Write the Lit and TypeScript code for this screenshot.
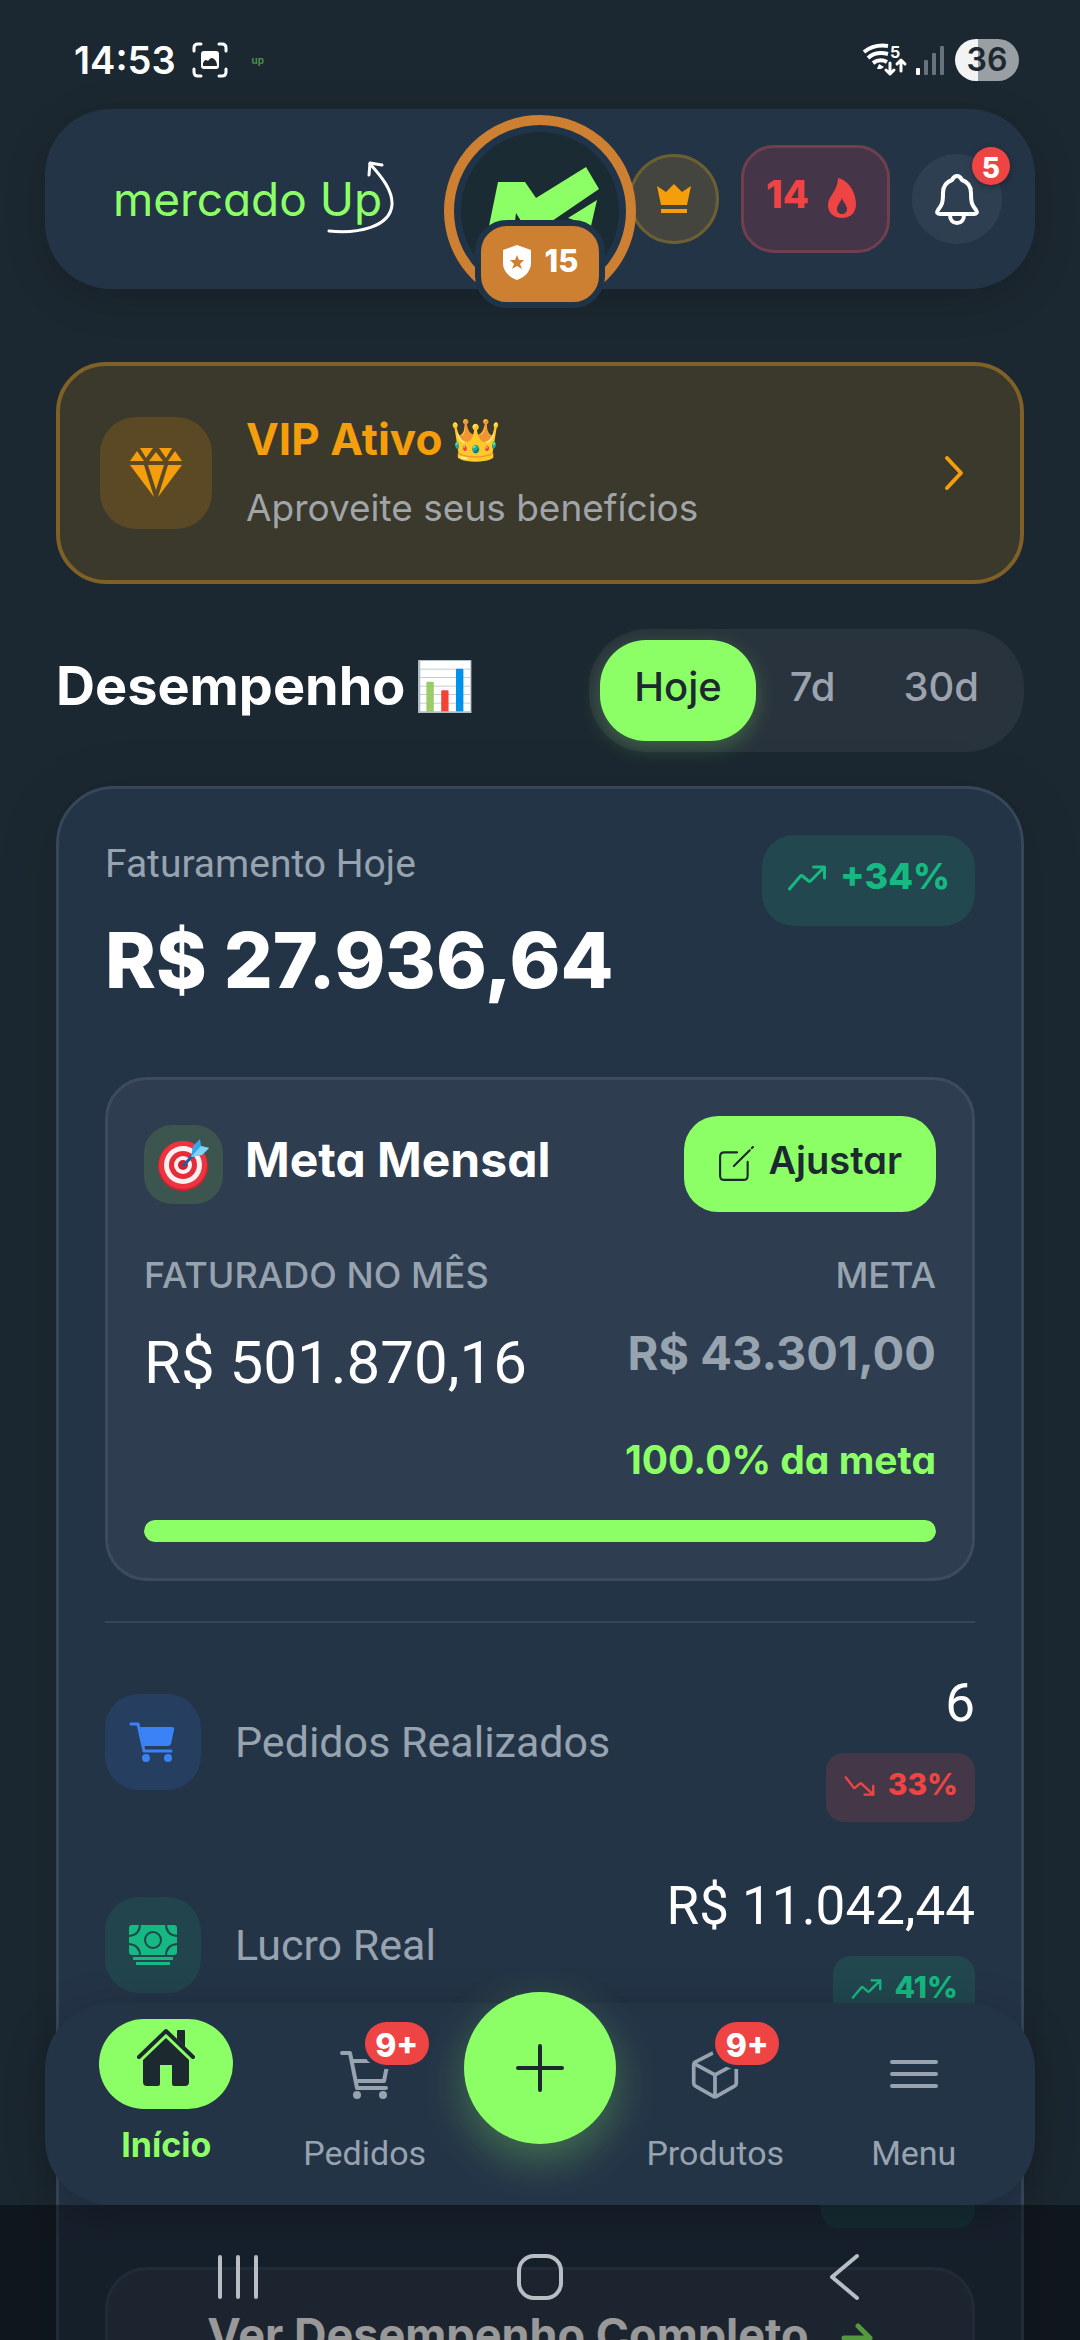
import { LitElement, html, css, svg, nothing } from "lit";
import { customElement, property, state } from "lit/decorators.js";

const trendUp = svg`<path d="M2 25 L13 12 Q14 11 15 12 L21 17 Q22 18 23 17 L36 4 M26 3 H37 V14" />`;
const trendDown = svg`<path d="M2 3 L12 16 Q13 17 14 16 L20 11 Q21 10 22 11 L36 24 M26 25 H37 V14" />`;

const cartOutline = svg`
  <path d="M2 4 H10 L17 39 H46 M12 12 H48 L44 32 H16" fill="none" stroke="currentColor" stroke-width="4" stroke-linecap="round" stroke-linejoin="round" />
  <circle cx="17" cy="46" r="4" fill="currentColor" /><circle cx="43" cy="46" r="4" fill="currentColor" />`;

const cubeOutline = svg`
  <path d="M26 3 L47 14 Q49 15 49 18 V37 Q49 39 47 40 L28 51 Q26 52 24 51 L5 40 Q3 39 3 37 V18 Q3 15 5 14 Z M4 16 L26 28 L48 16 M26 28 V51" fill="none" stroke="currentColor" stroke-width="4" stroke-linejoin="round" />`;

const menuLines = svg`
  <path d="M3 13 H47 M3 25 H47 M3 37 H47" fill="none" stroke="currentColor" stroke-width="4" stroke-linecap="round" />`;

const homeSolid = svg`
  <path d="M2 30 L29 4 L56 30" fill="none" stroke="currentColor" stroke-width="4" stroke-linecap="round" stroke-linejoin="round" />
  <path d="M40 4 Q40 3 41 3 H47 Q48 3 48 4 V20 L40 12 Z" fill="currentColor" />
  <path d="M29 11 L52 33 V55 Q52 59 48 59 H37 Q35 59 35 57 V38 H23 V57 Q23 59 21 59 H10 Q6 59 6 55 V33 Z" fill="currentColor" />`;

@customElement("trend-badge")
export class TrendBadge extends LitElement {
  @property() value = "";
  @property() direction: "up" | "down" = "up";
  @property() size: "large" | "small" = "small";

  static styles = css`
    :host { display: block; }
    .badge {
      display: flex; align-items: center; gap: 13px; box-sizing: border-box;
      height: 69px; padding: 0 17px 8px 18px; border-radius: 18px;
      font: 800 30px/40px Inter, sans-serif; color: #ef4444; background: #443848;
    }
    .up { color: #15b981; background: #22474f; }
    .large { height: 91px; border-radius: 32px; padding: 0 25px 9px 25px; font-size: 36px; }
    svg { width: 31px; height: 22px; fill: none; stroke: currentColor; stroke-width: 3; stroke-linecap: round; stroke-linejoin: round; margin-top: 4px; }
    .large svg { width: 40px; height: 28px; }
  `;

  render() {
    return html`<div class="badge ${this.direction} ${this.size}">
      <svg viewBox="0 0 39 28" aria-hidden="true">${this.direction === "up" ? trendUp : trendDown}</svg>
      <span>${this.value}</span>
    </div>`;
  }
}

@customElement("status-bar")
export class StatusBar extends LitElement {
  static styles = css`
    :host { display: block; }
    .bar {
      display: flex; align-items: center; box-sizing: border-box; height: 109px;
      padding: 10px 61px 0 74px; color: #fff; font: 600 38px/48px Inter, sans-serif;
    }
    .shot { width: 36px; height: 36px; margin-left: 16px; }
    .app { margin-left: 24px; color: #4f9b4a; font-size: 10px; line-height: 12px; }
    .right { margin-left: auto; display: flex; align-items: center; gap: 9px; }
    .wifi { width: 45px; height: 34px; overflow: visible; }
    .signal { width: 28px; height: 30px; }
    .battery {
      width: 64px; height: 42px; border-radius: 21px; margin-left: 2px; text-align: center;
      font-size: 32px; line-height: 42px; color: #1d2831;
      background: linear-gradient(90deg, #f1f3f4 36%, #9a9fa4 36%);
    }
  `;

  render() {
    return html`<div class="bar">
      <span>14:53</span>
      <svg class="shot" viewBox="0 0 36 36" aria-hidden="true">
        <path d="M2 9 V6 Q2 2 6 2 H9 M27 2 H30 Q34 2 34 6 V9 M34 27 V30 Q34 34 30 34 H27 M9 34 H6 Q2 34 2 30 V27" fill="none" stroke="#fff" stroke-width="3" stroke-linecap="round" />
        <rect x="9" y="9" width="18" height="18" rx="3" fill="#fff" />
        <path d="M11 24 V21 Q13 16 16 19 Q19 14 22 17 Q25 19 25 24 Z" fill="#1d2831" />
      </svg>
      <span class="app">up</span>
      <div class="right">
        <svg class="wifi" viewBox="0 0 45 34" aria-hidden="true">
          <g fill="none" stroke="#fff" stroke-width="4">
            <path d="M2 9 Q12 1 26 3" /><path d="M6 15 Q14 8 26 11" /><path d="M11 20 Q18 15 25 19" />
          </g>
          <path d="M17 21 L22 24 L19 26 H15 Z" fill="#fff" />
          <g fill="none" stroke="#fff" stroke-width="3" stroke-linecap="round" stroke-linejoin="round">
            <path d="M28 20 V30 M24 27 L28 31 L32 27" /><path d="M39 28 V18 M35 21 L39 17 L43 21" />
          </g>
          <text x="28" y="15" fill="#fff" font-size="16" font-weight="700" font-family="Inter, sans-serif">5</text>
        </svg>
        <svg class="signal" viewBox="0 0 28 30" aria-hidden="true">
          <rect x="0" y="23" width="4" height="7" rx="1" fill="#fff" />
          <g fill="#68727b"><rect x="8" y="15" width="4" height="15" rx="1" /><rect x="16" y="8" width="4" height="22" rx="1" /><rect x="24" y="1" width="4" height="29" rx="1" /></g>
        </svg>
        <span class="battery">36</span>
      </div>
    </div>`;
  }
}

@customElement("app-header")
export class AppHeader extends LitElement {
  static styles = css`
    :host { display: block; }
    button { font: inherit; color: inherit; border: 0; margin: 0; padding: 0; background: none; }
    .header {
      position: relative; display: flex; align-items: center; justify-content: space-between;
      height: 180px; margin: 0 45px; padding: 0 33px 0 68px; border-radius: 66px;
      background: #243447; box-shadow: 0 10px 40px rgba(0, 0, 0, 0.2); font-family: Inter, sans-serif;
    }
    .logo { position: relative; font-size: 46px; line-height: 64px; font-weight: 400; color: #8cff66; font-feature-settings: "cv11"; }
    .swoosh { position: absolute; right: -12px; top: -6px; width: 72px; height: 76px; }
    .actions { display: flex; align-items: center; gap: 22px; }
    .crown {
      display: grid; place-items: center; width: 90px; height: 90px; box-sizing: border-box;
      border-radius: 45px; border: 3px solid #6c6033; background: #44453f;
    }
    .crown svg { width: 36px; height: 32px; }
    .streak {
      display: flex; align-items: center; gap: 18px; height: 108px; box-sizing: border-box; padding: 0 30px 10px 22px;
      border-radius: 33px; border: 3px solid #713e4e; background: #443648; color: #ef4444; font-size: 38px; font-weight: 800;
    }
    .streak svg { width: 30px; height: 40px; margin-top: 7px; }
    .bell { position: relative; display: grid; place-items: center; width: 90px; height: 90px; border-radius: 45px; background: #2f3f52; }
    .bell svg { width: 44px; height: 52px; }
    .count {
      position: absolute; right: -8px; top: -7px; width: 38px; height: 38px; border-radius: 19px;
      background: #ef4444; color: #fff; font-size: 28px; line-height: 42px; font-weight: 800;
      box-shadow: 0 2px 6px rgba(0, 0, 0, 0.3);
    }
    .avatar {
      position: absolute; left: 50%; top: 6px; margin-left: -96px; width: 192px; height: 192px; box-sizing: border-box;
      border: 10px solid #cd8032; border-radius: 96px; background: #1f3349;
    }
    .mark { display: block; width: 172px; height: 172px; }
    .level {
      position: absolute; left: 21px; top: 95px; display: flex; align-items: center; justify-content: center; gap: 13px;
      width: 130px; height: 88px; box-sizing: border-box; border: 6px solid #1f3349; border-radius: 32px;
      padding-bottom: 7px; background: #cd8032; color: #fff; font-size: 31px; font-weight: 800;
    }
    .level svg { width: 30px; height: 35px; margin-top: 4px; }
  `;

  render() {
    return html`<header class="header">
      <div class="logo">mercado Up
        <svg class="swoosh" viewBox="0 0 72 76" aria-hidden="true" fill="none" stroke="#fff" stroke-linecap="round" stroke-linejoin="round">
          <path d="M7 70 C36 73 68 66 70 44 C71 30 60 16 48 3" stroke-width="3" />
          <path d="M47 14 L48 2 L60 4" stroke-width="3" />
        </svg>
      </div>
      <div class="actions">
        <button class="crown" aria-label="VIP">
          <svg viewBox="0 0 36 32" fill="#f59e0b"><path d="M1 3 L10 9 L18 1 L26 9 L35 3 L31 22 H5 Z M5 26 H31 V30 H5 Z" /></svg>
        </button>
        <button class="streak">
          <span>14</span>
          <svg viewBox="0 0 30 40" fill="#ef4444" aria-hidden="true"><path fill-rule="evenodd" d="M11 0 C21 2 29 14 29 26 C29 35 23 40 15 40 C7 40 1 35 1 27 C1 18 11 13 11 0 Z M15 20 C14 24 10 27 10 31 C10 34 12 36 15 36 C18 36 20 34 20 31 C20 27 16 24 15 20 Z" /></svg>
        </button>
        <button class="bell" aria-label="5">
          <svg viewBox="0 0 44 52" fill="none" stroke="#fff" stroke-width="4" stroke-linejoin="round">
            <path d="M22 3 C19 3 18 5 17 7 C11 9 8 14 8 20 C8 30 7 32 3 37 C1 40 3 41 5 41 H39 C41 41 43 40 41 37 C37 32 36 30 36 20 C36 14 33 9 27 7 C26 5 25 3 22 3 Z" />
            <path d="M15 42 C15 47 18 50 22 50 C26 50 29 47 29 42" />
          </svg>
          <span class="count">5</span>
        </button>
      </div>
      <div class="avatar">
        <svg class="mark" viewBox="454 125 172 172" aria-hidden="true">
          <circle cx="540" cy="211" r="79" fill="#1b2b33" />
          <path d="M498 182 H525 L536 198 L586 167 L599 189 L552 221 H521 L516 213 L515 221 L489 226 Z M597 200 L591 226 L568 218 Z" fill="#8cff66" />
        </svg>
        <div class="level">
          <svg viewBox="0 0 30 35" aria-hidden="true"><path d="M15 0 L29 5 V18 C29 26 23 32 15 35 C7 32 1 26 1 18 V5 Z" fill="#fff" /><path d="M15 10 L17 15 L22 15 L18 19 L20 24 L15 21 L10 24 L12 19 L8 15 L13 15 Z" fill="#cd8032" /></svg>
          <span>15</span>
        </div>
      </div>
    </header>`;
  }
}

@customElement("goal-card")
export class GoalCard extends LitElement {
  @property({ type: Number }) progress = 100;

  static styles = css`
    :host { display: block; font-family: Inter, sans-serif; font-feature-settings: "cv11"; }
    .card { padding: 36px; border: 3px solid #3d4b5e; border-radius: 42px; background: #2f3d50; }
    .top { display: flex; align-items: center; height: 96px; }
    .target { display: grid; place-items: center; width: 79px; height: 79px; border-radius: 28px; background: #3d554f; }
    .target svg { width: 52px; height: 52px; margin-top: 2px; }
    h3 { margin: 0 auto 0 22px; padding-bottom: 8px; font-size: 48px; line-height: 60px; font-weight: 700; color: #fff; }
    button {
      display: flex; align-items: center; gap: 14px; height: 96px; border: 0; border-radius: 34px; padding: 0 34px 8px 34px;
      background: #8cff66; color: #1c2a2f; font: 600 38px/44px Inter, sans-serif; font-feature-settings: "cv11";
    }
    button svg { width: 36px; height: 36px; margin-top: 8px; }
    .figures { display: flex; justify-content: space-between; margin-top: 41px; }
    .end { text-align: right; }
    .caption { font-size: 36px; line-height: 44px; font-weight: 500; color: #97a3af; }
    .current { margin-top: 25px; font: 400 60px/82px Roboto, sans-serif; color: #fff; }
    .goal { margin-top: 25px; font-size: 47px; line-height: 62px; font-weight: 700; color: #97a3af; }
    .percent { margin-top: 50px; font-size: 39px; line-height: 52px; font-weight: 700; color: #8cff66; }
    .track { height: 22px; margin-top: 34px; border-radius: 11px; background: #3d4b5e; overflow: hidden; }
    .fill { height: 100%; border-radius: 11px; background: #8cff66; }
  `;

  render() {
    return html`<section class="card">
      <div class="top">
        <div class="target">
          <svg viewBox="0 0 52 52" aria-hidden="true">
            <circle cx="25" cy="27" r="25" fill="#d3202f" /><circle cx="25" cy="26" r="24" fill="#ee3340" />
            <circle cx="25" cy="26" r="19" fill="#fbeff0" /><circle cx="25" cy="26" r="14" fill="#e52c3b" />
            <circle cx="25" cy="26" r="9" fill="#fbeff0" /><circle cx="25" cy="26" r="5" fill="#d3202f" />
            <path d="M25 27 L38 13" stroke="#1b5fa8" stroke-width="3" />
            <path d="M33 18 L35 7 L42 0 L43 7 L51 9 L44 16 Z" fill="#35a7ea" /><path d="M33 18 L43 7 L51 9 L44 16 Z" fill="#7fd4fa" />
          </svg>
        </div>
        <h3>Meta Mensal</h3>
        <button>
          <svg viewBox="0 0 34 34" fill="none" stroke="#1c2a2f" stroke-width="2" stroke-linecap="round" stroke-linejoin="round" aria-hidden="true">
            <path d="M18 6 H6 Q2 6 2 10 V28 Q2 32 6 32 H24 Q28 32 28 28 V15" /><path d="M15 19 L30 4 M32 2 L33 1" />
          </svg>
          <span>Ajustar</span>
        </button>
      </div>
      <div class="figures">
        <div>
          <div class="caption">FATURADO NO MÊS</div>
          <div class="current">R$ 501.870,16</div>
        </div>
        <div class="end">
          <div class="caption">META</div>
          <div class="goal">R$ 43.301,00</div>
          <div class="percent">100.0% da meta</div>
        </div>
      </div>
      <div class="track"><div class="fill" style="width:${this.progress}%"></div></div>
    </section>`;
  }
}

@customElement("bottom-nav")
export class BottomNav extends LitElement {
  static styles = css`
    :host { display: block; font-family: Inter, sans-serif; }
    button { font: inherit; color: inherit; border: 0; margin: 0; padding: 0; background: none; }
    .nav {
      display: flex; align-items: flex-start; height: 202px; box-sizing: border-box; margin: 0 45px; padding: 0 22px;
      border-radius: 66px; background: #243447; box-shadow: 0 6px 40px rgba(0, 0, 0, 0.22);
    }
    .tab { flex: 1; display: flex; flex-direction: column; align-items: center; padding-top: 16px; color: #97a3af; text-decoration: none; }
    .icon { display: grid; place-items: center; height: 110px; }
    .glyph { position: relative; width: 50px; height: 50px; }
    .glyph svg { display: block; width: 100%; height: 100%; }
    .label { font: 400 34px/48px Roboto, sans-serif; }
    .active { color: #8cff66; }
    .active .icon { width: 134px; height: 90px; border-radius: 45px; background: #8cff66; color: #1c2a2f; }
    .active .glyph { width: 60px; height: 62px; margin-bottom: 12px; }
    .active .label { margin-top: 16px; font: 700 34px/40px Inter, sans-serif; }
    .count {
      position: absolute; left: 25px; top: -27px; width: 64px; height: 43px; border-radius: 22px; box-shadow: 0 0 0 4px #243447;
      background: #ef4444; color: #fff; font: 800 32px/48px Inter, sans-serif; text-align: center;
    }
    .add {
      display: grid; place-items: center; width: 152px; height: 152px; margin-top: -11px; border-radius: 76px;
      background: #8cff66; box-shadow: 0 16px 44px rgba(140, 255, 102, 0.3);
    }
    .add svg { width: 50px; height: 50px; }
    .system { display: flex; align-items: center; justify-content: space-between; height: 135px; box-sizing: border-box; padding: 9px 211px 0; background: rgba(0, 0, 0, 0.4); }
    .system button { width: 50px; height: 50px; }
    .system svg { display: block; width: 50px; height: 50px; fill: none; stroke: #b9bdc4; stroke-width: 4; stroke-linecap: round; stroke-linejoin: round; }
  `;

  private tab(label: string, glyph: unknown, box: string, count = "", active = false) {
    return html`<a class="tab ${active ? "active" : ""}" href="#${label}">
      <span class="icon"><span class="glyph">
        <svg viewBox=${box} aria-hidden="true">${glyph}</svg>
        ${count ? html`<span class="count">${count}</span>` : nothing}
      </span></span>
      <span class="label">${label}</span>
    </a>`;
  }

  render() {
    return html`
      <nav class="nav">
        ${this.tab("Início", homeSolid, "0 0 58 62", "", true)}
        ${this.tab("Pedidos", cartOutline, "0 0 50 50", "9+")}
        <button class="add" aria-label="+">
          <svg viewBox="0 0 50 50" fill="none" stroke="#1c2a2f" stroke-width="4" stroke-linecap="round"><path d="M25 3 V47 M3 25 H47" /></svg>
        </button>
        ${this.tab("Produtos", cubeOutline, "0 0 52 54", "9+")}
        ${this.tab("Menu", menuLines, "0 0 50 50")}
      </nav>
      <div class="system">
        <button aria-label="Recentes"><svg viewBox="0 0 50 50"><path d="M9 5 V45 M27 5 V45 M45 5 V45" /></svg></button>
        <button aria-label="Início"><svg viewBox="0 0 50 50"><rect x="4" y="4" width="42" height="42" rx="15" /></svg></button>
        <button aria-label="Voltar"><svg viewBox="0 0 50 50"><path d="M38 4 L13 25 L38 46" /></svg></button>
      </div>`;
  }
}

@customElement("app-root")
export class AppRoot extends LitElement {
  @state() private period = "Hoje";

  static styles = css`
    :host { display: block; font-family: Inter, sans-serif; font-feature-settings: "cv11"; }
    button { font: inherit; color: inherit; border: 0; margin: 0; padding: 0; background: none; text-align: left; font-feature-settings: inherit; }
    .screen { position: relative; height: 100vh; overflow: hidden; background: #1c2831; }
    .content { display: flex; flex-direction: column; padding: 73px 56px 0; }
    .vip {
      display: flex; align-items: center; height: 222px; box-sizing: border-box; padding: 0 56px 0 40px;
      border: 4px solid #7f6026; border-radius: 50px; background: #3b382c;
    }
    .gem { display: grid; place-items: center; width: 112px; height: 112px; border-radius: 36px; background: #5b4926; }
    .gem svg { width: 54px; height: 52px; }
    .vip-text { flex: 1; display: flex; flex-direction: column; gap: 8px; margin-left: 34px; }
    .vip-title { display: flex; align-items: center; gap: 8px; font-size: 44px; line-height: 62px; font-weight: 700; color: #f59e0b; }
    .crown { font-size: 41px; }
    .vip-note { font-size: 37px; line-height: 60px; color: #a0a5a9; }
    .chevron { width: 20px; height: 36px; }
    .heading { display: flex; align-items: center; justify-content: space-between; margin-top: 45px; }
    h2 { display: flex; align-items: center; gap: 10px; margin: 0; padding-bottom: 10px; font-size: 54px; line-height: 70px; font-weight: 700; color: #fff; }
    .chart { font-size: 48px; }
    .periods { display: flex; padding: 11px; border-radius: 58px; background: #29333d; }
    .period { height: 101px; padding: 0 34px 9px; border-radius: 46px; font-size: 40px; font-weight: 500; color: #9ca3af; }
    .selected { background: #8cff66; color: #1c2a2f; box-shadow: 0 6px 20px rgba(140, 255, 102, 0.25); }
    .panel {
      margin-top: 34px; padding: 46px; border: 3px solid #37475a; border-radius: 58px; background: #243447;
      box-shadow: 0 10px 60px rgba(0, 0, 0, 0.15);
    }
    .revenue { display: flex; align-items: flex-start; justify-content: space-between; }
    .revenue-label { font: 400 39px/58px Roboto, sans-serif; color: #97a3af; }
    .revenue-value { margin-top: 19px; font-size: 77px; line-height: 96px; font-weight: 800; color: #fff; }
    goal-card { margin-top: 69px; }
    .divider { height: 2px; margin: 40px 0 38px; border: 0; background: #37475a; }
    .metrics { display: flex; flex-direction: column; gap: 42px; }
    .metric { display: flex; align-items: center; height: 161px; }
    .metric-icon { display: grid; place-items: center; width: 96px; height: 96px; border-radius: 34px; background: #263f61; }
    .profit { background: #22444d; }
    .metric-icon svg { width: 48px; height: 42px; }
    .metric-name { flex: 1; margin-left: 34px; font: 400 43px/60px Roboto, sans-serif; color: #97a3af; }
    .metric-data { display: flex; flex-direction: column; align-items: flex-end; gap: 8px; }
    .metric-value { font: 400 53px/84px Roboto, sans-serif; color: #fff; }
    .metric-rest { width: 154px; height: 69px; margin-top: auto; margin-left: auto; border-radius: 18px; background: #22474f; }
    .full {
      display: flex; justify-content: center; align-items: center; gap: 32px; width: 100%; margin-top: 39px; padding: 42px 0;
      border: 3px solid #37475a; border-radius: 42px; background: #2f3d50; font-size: 45px; line-height: 46px; font-weight: 700; color: #fff;
    }
    .full svg { width: 32px; height: 32px; margin-top: 6px; }
    .bottom { position: absolute; left: 0; right: 0; bottom: 0; }
  `;

  render() {
    return html`<main class="screen">
      <status-bar></status-bar>
      <app-header></app-header>
      <div class="content">
        <button class="vip">
          <span class="gem">
            <svg viewBox="0 0 54 52" fill="#f59e0b" aria-hidden="true">
              <path d="M8 4 L15 14 H1 Z M11 1 H24 L17 11 Z M27 5 L34 14 H20 Z M30 1 H43 L37 11 Z M46 4 L53 14 H39 Z M1 18 H15 L25 50 Z M19 18 H35 L27 43 Z M39 18 H53 L29 50 Z" />
            </svg>
          </span>
          <span class="vip-text">
            <span class="vip-title">VIP Ativo <span class="crown">👑</span></span>
            <span class="vip-note">Aproveite seus benefícios</span>
          </span>
          <svg class="chevron" viewBox="0 0 20 36" fill="none" stroke="#f59e0b" stroke-width="4" stroke-linecap="round" stroke-linejoin="round" aria-hidden="true"><path d="M3 3 L17 18 L3 33" /></svg>
        </button>
        <div class="heading">
          <h2>Desempenho <span class="chart">📊</span></h2>
          <div class="periods">
            ${["Hoje", "7d", "30d"].map(
              (p) => html`<button class="period ${p === this.period ? "selected" : ""}" aria-pressed=${p === this.period} @click=${() => (this.period = p)}>${p}</button>`,
            )}
          </div>
        </div>
        <section class="panel">
          <div class="revenue">
            <div>
              <div class="revenue-label">Faturamento Hoje</div>
              <div class="revenue-value">R$ 27.936,64</div>
            </div>
            <trend-badge value="+34%" size="large"></trend-badge>
          </div>
          <goal-card></goal-card>
          <hr class="divider" />
          <div class="metrics">
            <div class="metric">
              <span class="metric-icon">
                <svg viewBox="0 0 48 42" fill="#3b82f6" aria-hidden="true">
                  <path d="M2 3 H9 L15 30 H42" fill="none" stroke="#3b82f6" stroke-width="3" stroke-linecap="round" stroke-linejoin="round" />
                  <path d="M11 6 H43 Q46 6 45 9 L42 23 Q41 25 39 25 H15 Z" /><circle cx="17" cy="37" r="4" /><circle cx="39" cy="37" r="4" />
                </svg>
              </span>
              <span class="metric-name">Pedidos Realizados</span>
              <div class="metric-data"><span class="metric-value">6</span><trend-badge value="33%" direction="down"></trend-badge></div>
            </div>
            <div class="metric">
              <span class="metric-icon profit">
                <svg viewBox="0 0 48 42" fill="#15b981" aria-hidden="true">
                  <rect x="0" y="1" width="48" height="30" rx="3" /><rect x="4" y="33" width="40" height="3" /><rect x="7" y="38" width="34" height="3" />
                  <g fill="none" stroke="#22444d" stroke-width="2"><circle cx="24" cy="16" r="8" /><path d="M11 0 Q11 11 0 12 M37 0 Q37 11 48 12 M11 32 Q11 21 0 20 M37 32 Q37 21 48 20" /></g>
                </svg>
              </span>
              <span class="metric-name">Lucro Real</span>
              <div class="metric-data"><span class="metric-value">R$ 11.042,44</span><trend-badge value="41%"></trend-badge></div>
            </div>
            <div class="metric"><span class="metric-rest"></span></div>
          </div>
          <button class="full">
            <span>Ver Desempenho Completo</span>
            <svg viewBox="0 0 32 32" fill="none" stroke="#8cff66" stroke-width="5" stroke-linecap="round" stroke-linejoin="round" aria-hidden="true"><path d="M3 16 H29 M17 4 L29 16 L17 28" /></svg>
          </button>
        </section>
      </div>
      <bottom-nav class="bottom"></bottom-nav>
    </main>`;
  }
}
